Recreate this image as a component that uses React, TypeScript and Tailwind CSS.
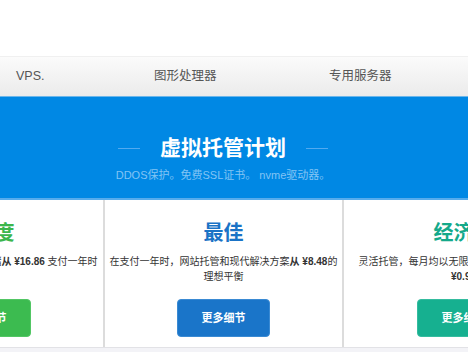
const font = { fontFamily: '"Liberation Sans", "Noto Sans CJK SC", sans-serif' };

type Plan = {
  title: string;
  titleColor: string;
  button: string;
  line1: [string, string, string];
  line2: string;
  line2Bold?: boolean;
};

const plans: Plan[] = [
  {
    title: '高速度',
    titleColor: 'text-[#3cb64c]',
    button: 'bg-[#3cbb50] border-[#52c664]',
    line1: ['强大的处理器与极速固态存储', '从 ¥16.86', ' 支付一年时'],
    line2: '的性能',
  },
  {
    title: '最佳',
    titleColor: 'text-[#1a73c6]',
    button: 'bg-[#1a75c9] border-[#3a8ad3]',
    line1: ['在支付一年时，网站托管和现代解决方案', '从 ¥8.48', '的'],
    line2: '理想平衡',
  },
  {
    title: '经济型',
    titleColor: 'text-[#14a98a]',
    button: 'bg-[#16b090] border-[#35bc9f]',
    line1: ['灵活托管，每月均以无限带宽与存储空间计费，', '', ''],
    line2: '¥0.99',
    line2Bold: true,
  },
];

function PlanCard({ plan, last }: { plan: Plan; last?: boolean }) {
  return (
    <div
      className={`w-[239px] shrink-0 flex flex-col items-center pt-[21px] ${
        last ? '' : 'border-r-2 border-[#dcdcdc]'
      }`}
    >
      <h3 className={`text-[20px] leading-[24px] font-bold ${plan.titleColor}`}>{plan.title}</h3>
      <div className="mt-[9px] h-[30px] flex flex-col items-center text-[10px] leading-[15px] text-[#333] whitespace-nowrap">
        <p>
          {plan.line1[0]}
          <b>{plan.line1[1]}</b>
          {plan.line1[2]}
        </p>
        <p className={plan.line2Bold ? 'font-bold' : ''}>{plan.line2}</p>
      </div>
      <button
        className={`mt-[15px] w-[93px] h-[38px] rounded-[4px] border text-[11px] font-bold text-white ${plan.button}`}
      >
        更多细节
      </button>
    </div>
  );
}

export default function App() {
  return (
    <div className="w-[468px] h-[352px] overflow-hidden bg-[#f3f3f7]" style={font}>
      <div className="h-[57px] bg-white border-b border-[#f0f0f0]" />

      <nav className="h-[39px] flex items-center bg-gradient-to-b from-[#fbfbfb] to-[#ebebeb] text-[12.5px] text-[#555]">
        <div className="w-[154px] pl-[16px]">VPS.</div>
        <div className="w-[175px]">图形处理器</div>
        <div>专用服务器</div>
      </nav>

      <section className="h-[104px] bg-[#0088e4] border-t border-[#6cb6ea] border-b-2 border-b-[#56acec] pr-[22px] flex flex-col items-center">
        <div className="mt-[38px] flex items-center gap-[20px]">
          <span className="w-[22px] h-px bg-[#52aaf0]" />
          <h2 className="text-[21px] leading-[26px] font-bold text-white">虚拟托管计划</h2>
          <span className="w-[22px] h-px bg-[#52aaf0]" />
        </div>
        <p className="mt-[7px] text-[11px] leading-[14px] text-[#82c4f4]">
          DDOS保护。免费SSL证书。 nvme驱动器。
        </p>
      </section>

      <div className="h-[148px] bg-white border-b border-[#e2e2e6] flex -ml-[134px]">
        {plans.map((p, i) => (
          <PlanCard key={p.title} plan={p} last={i === plans.length - 1} />
        ))}
      </div>
    </div>
  );
}
